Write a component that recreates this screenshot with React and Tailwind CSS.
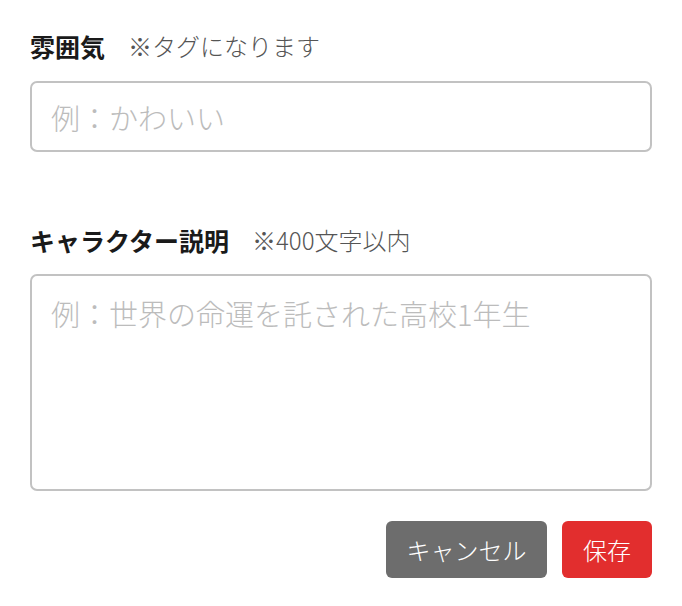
export default function App() {
  return (
    <div className="w-[682px] h-[606px] bg-white px-[30px] pt-[30px] font-['Noto_Sans_CJK_JP',sans-serif]">
      {/* 雰囲気 */}
      <div className="flex items-center h-[32px] mb-[19px]">
        <span className="text-[25px] font-bold text-[#1a1a1a] leading-none">雰囲気</span>
        <span className="ml-[23px] text-[24px] font-light text-[#555] leading-none">※タグになります</span>
      </div>
      <input
        type="text"
        placeholder="例：かわいい"
        className="block w-full h-[71px] border-2 border-[#c2c2c2] rounded-[7px] px-[19px] text-[29px] font-light text-[#333] placeholder:text-[#bcbcbc] outline-none"
      />

      {/* キャラクター説明 */}
      <div className="flex items-center h-[32px] mt-[72px] mb-[18px]">
        <span className="text-[25px] font-bold text-[#1a1a1a] leading-none">キャラクター説明</span>
        <span className="ml-[23px] text-[24px] font-light text-[#555] leading-none">※400文字以内</span>
      </div>
      <textarea
        placeholder="例：世界の命運を託された高校1年生"
        className="block w-full h-[217px] border-2 border-[#c2c2c2] rounded-[7px] px-[19px] pt-[17px] text-[29px] font-light leading-[40px] text-[#333] placeholder:text-[#bcbcbc] outline-none resize-none"
      />

      {/* Buttons */}
      <div className="flex justify-end gap-[15px] mt-[30px]">
        <button className="w-[161px] h-[57px] rounded-[6px] bg-[#6d6d6d] text-white text-[24px] font-light">
          キャンセル
        </button>
        <button className="w-[90px] h-[57px] rounded-[6px] bg-[#e22e2e] text-white text-[24px] font-light">
          保存
        </button>
      </div>
    </div>
  );
}
